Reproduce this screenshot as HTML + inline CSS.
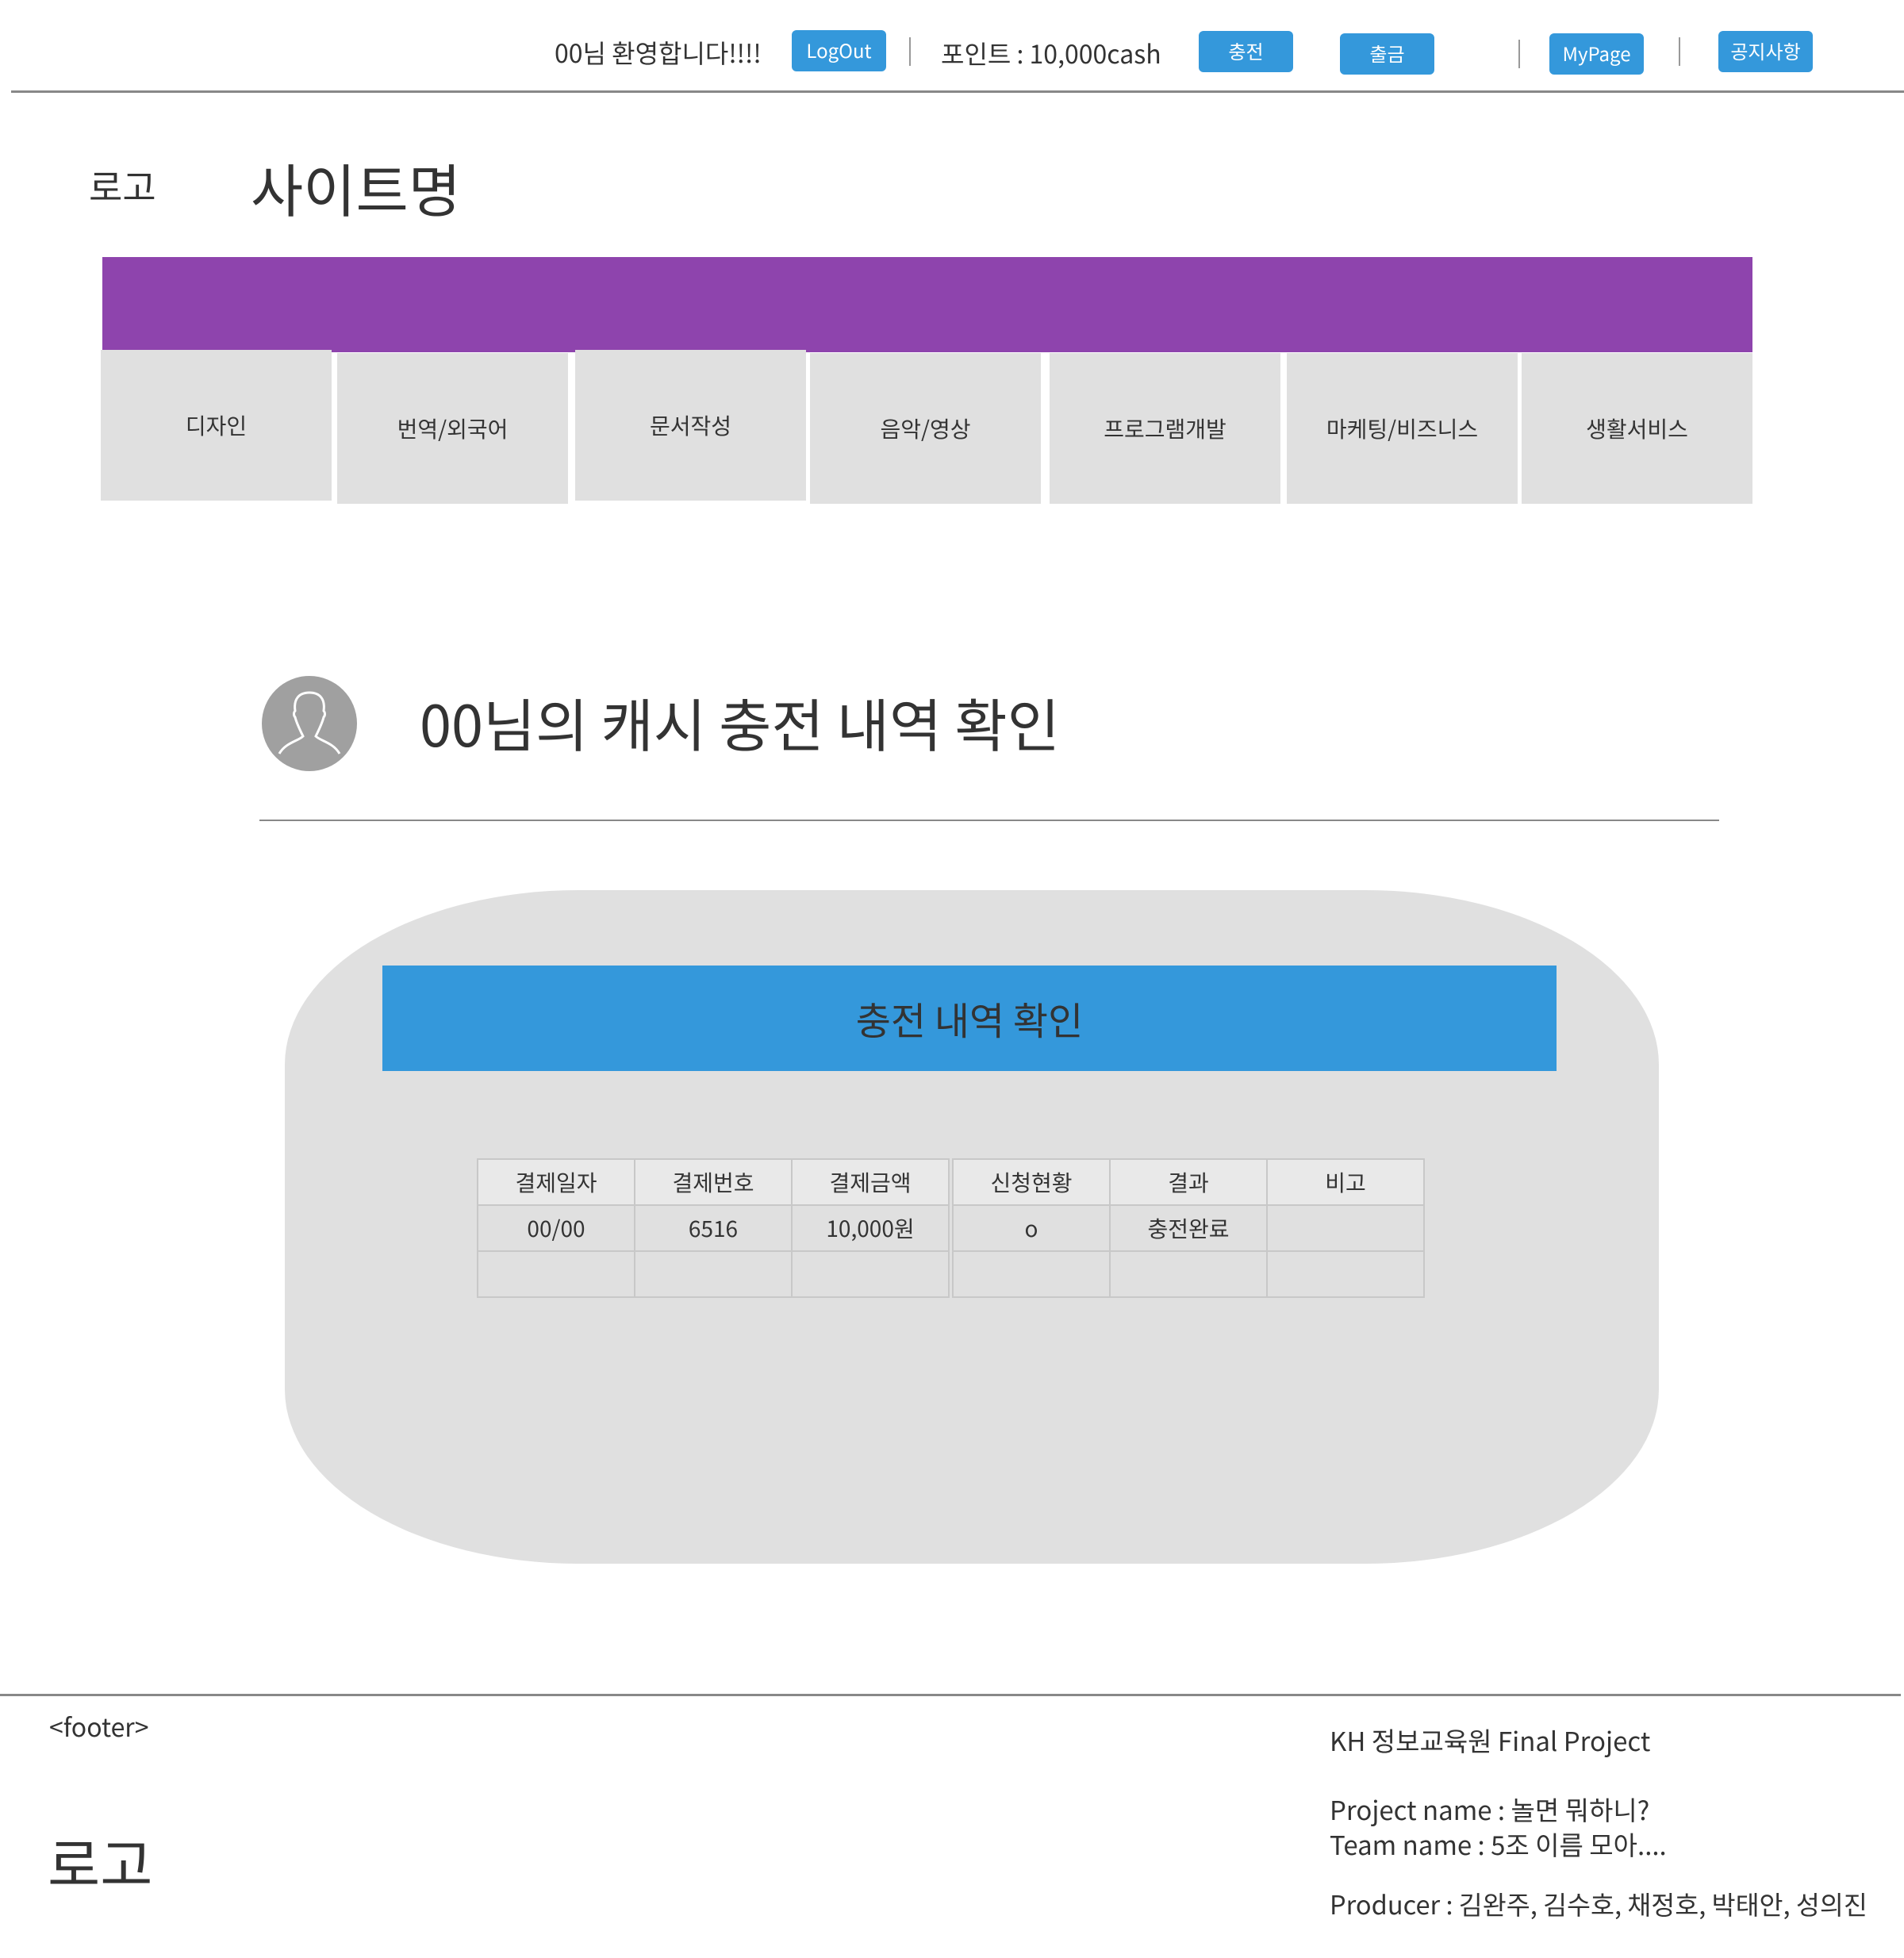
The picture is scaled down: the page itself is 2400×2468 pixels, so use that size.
<!DOCTYPE html>
<html><head><meta charset="utf-8"><style>
*{margin:0;padding:0;box-sizing:border-box}
body{width:2400px;height:2468px;background:#fff;position:relative;overflow:hidden;font-family:"Noto Sans CJK KR","Liberation Sans",sans-serif;color:#333}
.a{position:absolute;white-space:nowrap}
.btn{position:absolute;background:#3498db;color:#fff;border-radius:6px;font-size:24px;text-align:center;line-height:50px;height:52px;width:119px}
.vd{position:absolute;width:2px;height:36px;background:#999}
.cell{position:absolute;top:442px;height:190px;background:#e0e0e0;font-size:28px;text-align:center;line-height:190px}
table{position:absolute;border-collapse:collapse;font-size:28px;top:1460px}
td{border:2px solid #c8c8c8;height:58px;width:198px;text-align:center;background:#e0e0e0}
tr:first-child td{background:#e9e9e9}
</style></head><body>
<div class="a" style="left:699px;top:43px;font-size:32px">00님 환영합니다!!!!</div>
<div class="btn" style="left:998px;top:38px">LogOut</div>
<div class="vd" style="left:1146px;top:47px"></div>
<div class="a" style="left:1186px;top:44px;font-size:32px">포인트 : 10,000cash</div>
<div class="btn" style="left:1511px;top:39px">충전</div>
<div class="btn" style="left:1689px;top:42px">출금</div>
<div class="vd" style="left:1914px;top:50px"></div>
<div class="btn" style="left:1953px;top:42px">MyPage</div>
<div class="vd" style="left:2116px;top:47px"></div>
<div class="btn" style="left:2166px;top:39px">공지사항</div>
<div class="a" style="left:14px;top:114px;width:2386px;height:3px;background:#888"></div>
<div class="a" style="left:112px;top:201px;font-size:46px">로고</div>
<div class="a" style="left:316px;top:183px;font-size:72px">사이트명</div>
<div class="a" style="left:129px;top:324px;width:2080px;height:120px;background:#8e44ad"></div>
<div class="cell" style="left:127px;width:291px;top:441px">디자인</div>
<div class="cell" style="left:425px;width:291px;top:445px">번역/외국어</div>
<div class="cell" style="left:725px;width:291px;top:441px">문서작성</div>
<div class="cell" style="left:1021px;width:291px;top:445px">음악/영상</div>
<div class="cell" style="left:1323px;width:291px;top:445px">프로그램개발</div>
<div class="cell" style="left:1622px;width:291px;top:445px">마케팅/비즈니스</div>
<div class="cell" style="left:1918px;width:291px;top:445px">생활서비스</div>
<svg class="a" style="left:330px;top:852px" width="120" height="120" viewBox="0 0 120 120">
<circle cx="60" cy="60" r="60" fill="#a0a0a0"/>
<path d="M22 98 C30 84 46 82 52 76 C48 68 44 60 42 52 C40 50 40 46 42 44 C40 30 46 21 60 21 C74 21 80 30 78 44 C80 46 80 50 78 52 C76 60 72 68 68 76 C74 82 90 84 98 98" fill="none" stroke="#fff" stroke-width="3"/>
</svg>
<div class="a" style="left:529px;top:857px;font-size:72px">00님의 캐시 충전 내역 확인</div>
<div class="a" style="left:327px;top:1033px;width:1840px;height:2px;background:#888"></div>
<div class="a" style="left:359px;top:1122px;width:1732px;height:849px;background:#e0e0e0;border-radius:370px / 220px"></div>
<div class="a" style="left:482px;top:1217px;width:1480px;height:133px;background:#3498db;text-align:center;line-height:133px;font-size:48px;color:#333">충전 내역 확인</div>
<table style="left:601px"><tr><td>결제일자</td><td>결제번호</td><td>결제금액</td></tr><tr><td>00/00</td><td>6516</td><td>10,000원</td></tr><tr><td></td><td></td><td></td></tr></table>
<table style="left:1200px"><tr><td>신청현황</td><td>결과</td><td>비고</td></tr><tr><td>o</td><td>충전완료</td><td></td></tr><tr><td></td><td></td><td></td></tr></table>
<div class="a" style="left:0;top:2135px;width:2396px;height:3px;background:#888"></div>
<div class="a" style="left:62px;top:2153px;font-size:32px">&lt;footer&gt;</div>
<div class="a" style="left:60px;top:2293px;font-size:72px">로고</div>
<div class="a" style="left:1676px;top:2169px;font-size:33px">KH 정보교육원 Final Project</div>
<div class="a" style="left:1676px;top:2256px;font-size:33px">Project name : 놀면 뭐하니?</div>
<div class="a" style="left:1676px;top:2300px;font-size:33px">Team name : 5조 이름 모아....</div>
<div class="a" style="left:1676px;top:2376px;font-size:32.6px">Producer : 김완주, 김수호, 채정호, 박태안, 성의진</div>
</body></html>
